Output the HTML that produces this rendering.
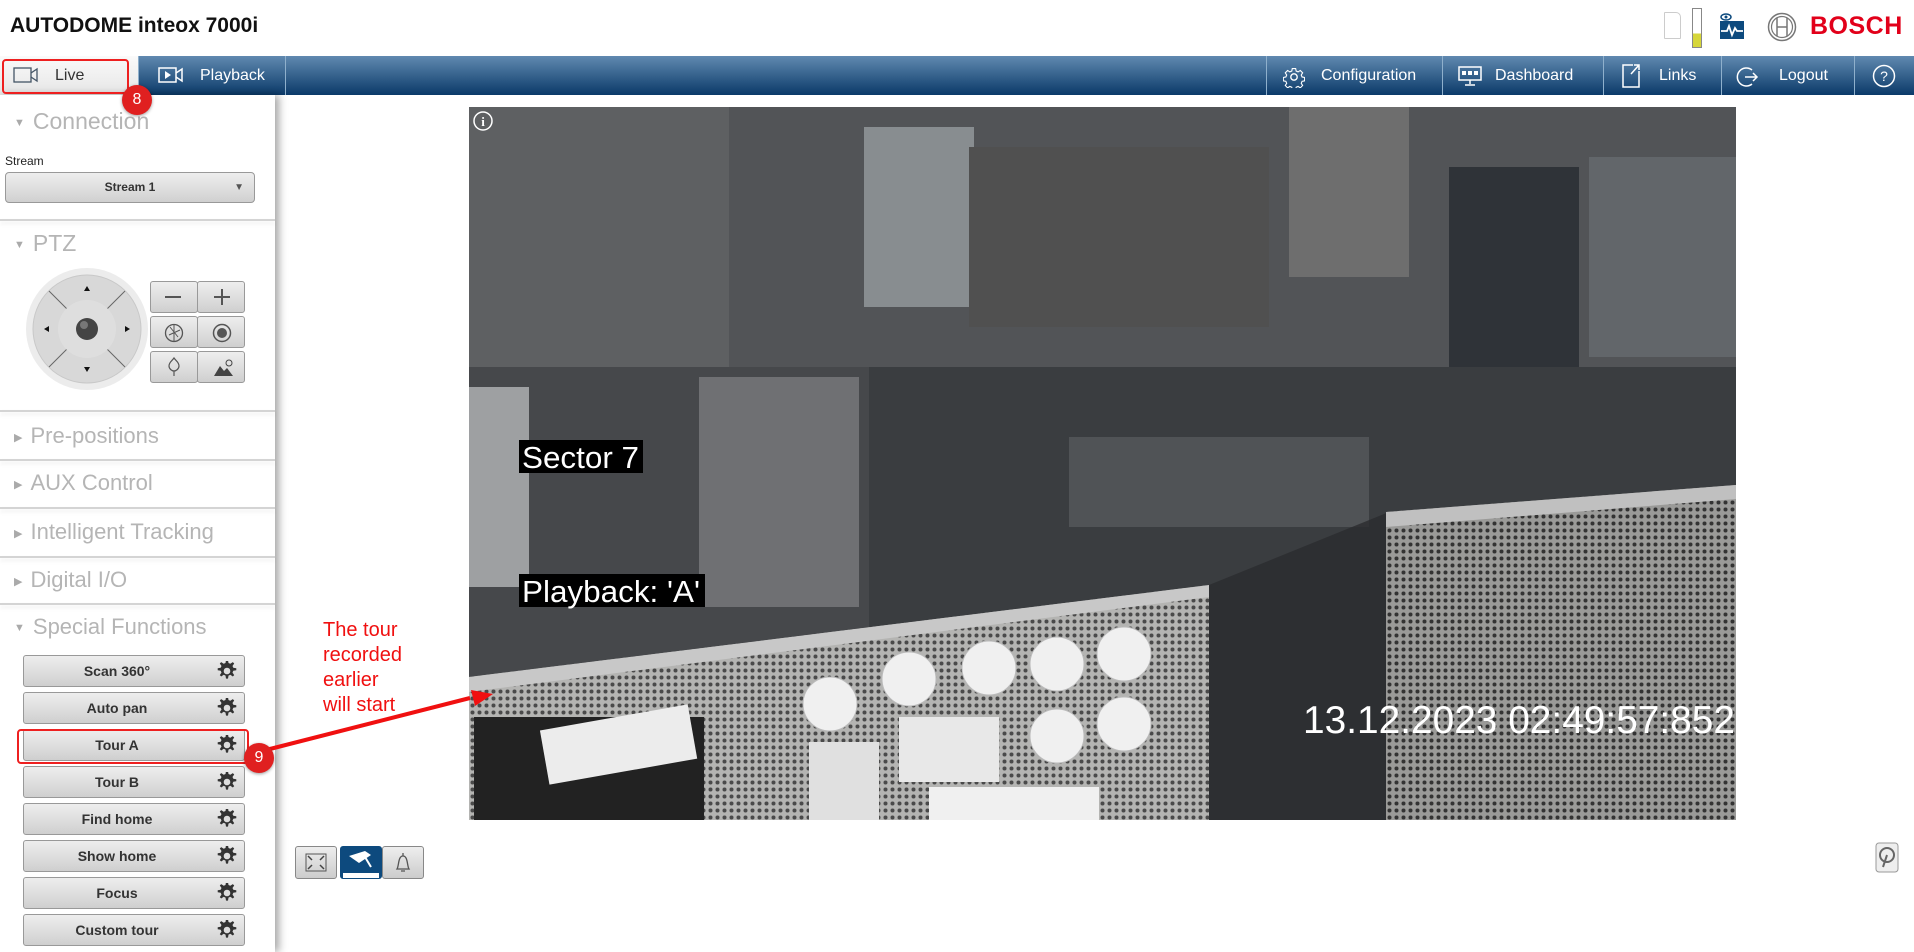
<!DOCTYPE html>
<html><head><meta charset="utf-8"><style>
*{margin:0;padding:0;box-sizing:border-box}
body{width:1914px;height:952px;background:#fff;font-family:"Liberation Sans",Arial,sans-serif;position:relative;overflow:hidden}
.abs{position:absolute}
#title{left:10px;top:14px;font-size:21px;font-weight:bold;color:#111}
#nav{left:0;top:56px;width:1914px;height:39px;background:linear-gradient(#6089b0,#0b3a69)}
.tab{position:absolute;top:0;height:39px;color:#fff;font-size:16px;line-height:39px;border-left:1px solid #8fb0cc}
.tab svg{position:absolute;top:10px}
#side{left:0;top:95px;width:275px;height:857px;background:#fff;box-shadow:4px 0 8px rgba(0,0,0,.35)}
.hdr{position:absolute;left:14px;font-size:23px;color:#b5b5b5}
.hdr span{font-size:11px;color:#aaa;margin-right:8px;vertical-align:middle}
.div{position:absolute;left:0;width:275px;height:2px;background:#d4d4d4;box-shadow:0 3px 4px rgba(0,0,0,.08)}
.btn{position:absolute;left:23px;width:222px;height:32px;border:1px solid #999;border-radius:3px;background:linear-gradient(#eee,#cfcfcf);font-size:14px;font-weight:bold;color:#333;text-align:center;line-height:30px;padding-right:34px}
.btn svg{position:absolute;right:6px;top:5px}
.pb{position:absolute;width:48px;height:32px;border:1px solid #999;border-radius:3px;background:linear-gradient(#eee,#cfcfcf)}
.red{color:#f01010;font-size:20px;line-height:25px}
.badge{position:absolute;width:30px;height:30px;border-radius:50%;background:#e02020;color:#fff;font-size:16px;text-align:center;line-height:30px;box-shadow:0 1px 3px rgba(0,0,0,.4)}
.vb{position:absolute;width:42px;height:33px;border:1px solid #888;border-radius:3px;background:linear-gradient(#eee,#ccc)}
</style></head><body>
<div id="title" class="abs">AUTODOME inteox 7000i</div>
<div class="abs" style="left:1664px;top:12px;width:17px;height:27px;border:1px solid #ccc;border-radius:1px 5px 1px 1px"></div>
<div class="abs" style="left:1692px;top:8px;width:10px;height:40px;border:1px solid #888;background:linear-gradient(#fff 65%,#d6d63a 65%)"></div>
<svg class="abs" style="left:1720px;top:12px" width="24" height="27" viewBox="0 0 24 27"><rect x="0" y="9" width="24" height="18" fill="#0d4a7e"/><ellipse cx="6" cy="5" rx="5" ry="3" fill="none" stroke="#0d4a7e" stroke-width="1.5"/><circle cx="6" cy="5" r="1.5" fill="#0d4a7e"/><path d="M1 19h6l2-5 3 9 3-7 2 3h6" stroke="#fff" stroke-width="1.8" fill="none"/></svg>
<svg class="abs" style="left:1767px;top:12px" width="30" height="30" viewBox="0 0 30 30"><circle cx="15" cy="15" r="13.5" fill="none" stroke="#777" stroke-width="1.5"/><circle cx="15" cy="15" r="10.5" fill="none" stroke="#777" stroke-width="1.2"/><path d="M10 6v18M20 6v18M10 15h10" stroke="#777" stroke-width="1.5"/></svg>
<div class="abs" style="left:1810px;top:12px;font-size:25px;font-weight:bold;color:#e2001a;letter-spacing:0.5px">BOSCH</div>

<div id="nav" class="abs">
 <div class="tab" style="left:0;width:138px;border:none;background:linear-gradient(#fafafa,#e6e6e6);color:#333"><svg style="left:13px" width="26" height="18" viewBox="0 0 26 18"><rect x="1" y="2" width="17" height="14" fill="none" stroke="#456" stroke-width="1.3"/><path d="M18 7l6-4v12l-6-4" fill="none" stroke="#456" stroke-width="1.3"/></svg><span style="position:absolute;left:55px">Live</span></div>
 <div class="tab" style="left:138px;width:147px"><svg style="left:19px" width="26" height="18" viewBox="0 0 26 18"><rect x="1" y="2" width="17" height="14" fill="none" stroke="#fff" stroke-width="1.5"/><path d="M7 5l6 4-6 4z" fill="#fff"/><path d="M18 7l6-4v12l-6-4" fill="none" stroke="#fff" stroke-width="1.5"/></svg><span style="position:absolute;left:61px">Playback</span></div>
 <div class="tab" style="left:285px;width:1px"></div>
 <div class="tab" style="left:1266px;width:176px"><svg style="left:16px" width="22" height="22" viewBox="0 0 24 24"><circle cx="12" cy="12" r="3.5" fill="none" stroke="#fff" stroke-width="1.5"/><path d="M10 2h4l.6 3 2.3 1 2.6-1.7 2.8 2.8-1.7 2.6 1 2.3 3 .6v4l-3 .6-1 2.3 1.7 2.6-2.8 2.8-2.6-1.7-2.3 1-.6 3h-4l-.6-3-2.3-1-2.6 1.7-2.8-2.8 1.7-2.6-1-2.3-3-.6v-4l3-.6 1-2.3-1.7-2.6 2.8-2.8 2.6 1.7 2.3-1z" fill="none" stroke="#fff" stroke-width="1.3" transform="scale(.92) translate(1 1)"/></svg><span style="position:absolute;left:54px">Configuration</span></div>
 <div class="tab" style="left:1442px;width:161px"><svg style="left:15px" width="24" height="20" viewBox="0 0 24 20"><rect x="1" y="1" width="22" height="13" fill="none" stroke="#fff" stroke-width="1.5"/><rect x="4" y="5" width="4" height="4" fill="#fff"/><rect x="10" y="5" width="4" height="4" fill="#fff"/><rect x="16" y="5" width="4" height="4" fill="#fff"/><path d="M12 14v4M7 19h10" stroke="#fff" stroke-width="1.5"/></svg><span style="position:absolute;left:52px">Dashboard</span></div>
 <div class="tab" style="left:1603px;width:118px"><svg style="left:17px;top:8px" width="20" height="24" viewBox="0 0 20 24"><path d="M12 1H2v22h16V7" fill="none" stroke="#fff" stroke-width="1.5"/><path d="M10 10L18 1M13 1h5v5" fill="none" stroke="#fff" stroke-width="1.5"/></svg><span style="position:absolute;left:55px">Links</span></div>
 <div class="tab" style="left:1721px;width:133px"><svg style="left:14px" width="24" height="22" viewBox="0 0 24 22"><path d="M16 4A9 9 0 1 0 16 18" fill="none" stroke="#fff" stroke-width="1.5"/><path d="M9 11h12M17 7l4 4-4 4" fill="none" stroke="#fff" stroke-width="1.5"/></svg><span style="position:absolute;left:57px">Logout</span></div>
 <div class="tab" style="left:1854px;width:60px"><svg style="left:17px;top:8px" width="24" height="24" viewBox="0 0 24 24"><circle cx="12" cy="12" r="10.5" fill="none" stroke="#fff" stroke-width="1.5"/><text x="12" y="17" text-anchor="middle" font-size="14" fill="#fff" font-family="Liberation Sans">?</text></svg></div>
</div>

<div id="side" class="abs">
 <div class="hdr" style="top:13px"><span>▼</span>Connection</div>
 <div class="abs" style="left:5px;top:59px;font-size:12px;color:#222">Stream</div>
 <div class="abs" style="left:5px;top:77px;width:250px;height:31px;border:1px solid #999;border-radius:4px;background:linear-gradient(#eee,#d0d0d0);font-size:12px;font-weight:bold;text-align:center;line-height:29px;color:#333">Stream 1<span style="position:absolute;right:10px;font-size:10px;color:#555">▼</span></div>
 <div class="div" style="top:124px"></div>
 <div class="hdr" style="top:135px"><span>▼</span>PTZ</div>
 <svg class="abs" style="left:25px;top:172px" width="124" height="124" viewBox="0 0 124 124"><circle cx="62" cy="62" r="61" fill="#ececec"/><circle cx="62" cy="62" r="54" fill="#d8d8d8" stroke="#c8c8c8"/><path d="M24 24L100 100M100 24L24 100" stroke="#666" stroke-width="1"/><circle cx="62" cy="62" r="29" fill="#dedede"/><circle cx="62" cy="62" r="11" fill="#444"/><circle cx="59" cy="58" r="4" fill="#777"/><path d="M62 19l-3 5h6z M62 105l-3-5h6z M19 62l5-3v6z M105 62l-5-3v6z" fill="#111"/></svg>
 <div class="pb" style="left:150px;top:186px"></div><div class="pb" style="left:197px;top:186px"></div>
 <div class="pb" style="left:150px;top:221px"></div><div class="pb" style="left:197px;top:221px"></div>
 <div class="pb" style="left:150px;top:256px"></div><div class="pb" style="left:197px;top:256px"></div>
 <svg class="abs" style="left:150px;top:186px" width="96" height="102" viewBox="0 0 96 102"><path d="M15 16h16" stroke="#555" stroke-width="2"/><path d="M72 8v16M64 16h16" stroke="#555" stroke-width="2"/><circle cx="24" cy="52" r="8.5" fill="none" stroke="#555" stroke-width="1.3"/><path d="M20 46l8 10M30 49l-11 5M24 44v16" stroke="#555" stroke-width="1"/><circle cx="72" cy="52" r="8.5" fill="none" stroke="#555" stroke-width="1.5"/><circle cx="72" cy="52" r="5" fill="#555"/><path d="M24 77c-2 3-5 4-5 8 0 3 3 5 5 5s5-2 5-5c0-4-3-5-5-8zM24 90v5" fill="none" stroke="#555" stroke-width="1.2"/><path d="M64 95l6-10 4 5 3-3 6 8z" fill="#444"/><circle cx="79" cy="82" r="3" fill="none" stroke="#444"/></svg>
 <div class="div" style="top:315px"></div>
 <div class="hdr" style="top:328px;font-size:22px"><span>▶</span>Pre-positions</div>
 <div class="div" style="top:364px"></div>
 <div class="hdr" style="top:375px;font-size:22px"><span>▶</span>AUX Control</div>
 <div class="div" style="top:412px"></div>
 <div class="hdr" style="top:424px;font-size:22px"><span>▶</span>Intelligent Tracking</div>
 <div class="div" style="top:461px"></div>
 <div class="hdr" style="top:472px;font-size:22px"><span>▶</span>Digital I/O</div>
 <div class="div" style="top:508px"></div>
 <div class="hdr" style="top:519px;font-size:22px"><span>▼</span>Special Functions</div>
</div>
<svg width="0" height="0" style="position:absolute"><defs><g id="gear"><path d="M10 0h2l.5 3 1.8.8 2.5-1.7 1.4 1.4-1.7 2.5.8 1.8 3 .5v2l-3 .5-.8 1.8 1.7 2.5-1.4 1.4-2.5-1.7-1.8.8-.5 3h-2l-.5-3-1.8-.8-2.5 1.7-1.4-1.4 1.7-2.5-.8-1.8-3-.5v-2l3-.5.8-1.8-1.7-2.5 1.4-1.4 2.5 1.7 1.8-.8z" fill="#333" transform="translate(-1 -1)"/><circle cx="10" cy="10" r="3.3" fill="#ddd"/></g></defs></svg>
<div class="btn" style="top:655px">Scan 360°<svg width="21" height="21" viewBox="0 0 21 21"><use href="#gear"/></svg></div>
<div class="btn" style="top:692px">Auto pan<svg width="21" height="21" viewBox="0 0 21 21"><use href="#gear"/></svg></div>
<div class="btn" style="top:729px">Tour A<svg width="21" height="21" viewBox="0 0 21 21"><use href="#gear"/></svg></div>
<div class="btn" style="top:766px">Tour B<svg width="21" height="21" viewBox="0 0 21 21"><use href="#gear"/></svg></div>
<div class="btn" style="top:803px">Find home<svg width="21" height="21" viewBox="0 0 21 21"><use href="#gear"/></svg></div>
<div class="btn" style="top:840px">Show home<svg width="21" height="21" viewBox="0 0 21 21"><use href="#gear"/></svg></div>
<div class="btn" style="top:877px">Focus<svg width="21" height="21" viewBox="0 0 21 21"><use href="#gear"/></svg></div>
<div class="btn" style="top:914px">Custom tour<svg width="21" height="21" viewBox="0 0 21 21"><use href="#gear"/></svg></div>

<svg class="abs" style="left:469px;top:107px" width="1267" height="713" viewBox="0 0 1267 713">
 <defs>
  <pattern id="mesh" width="7" height="7" patternUnits="userSpaceOnUse"><rect width="7" height="7" fill="#b4b4b2"/><circle cx="3.5" cy="3.5" r="2" fill="#4a4a4a"/></pattern>
  <pattern id="mesh2" width="7" height="7" patternUnits="userSpaceOnUse"><rect width="7" height="7" fill="#9a9a98"/><circle cx="3.5" cy="3.5" r="2" fill="#333"/></pattern>
 </defs>
 <rect width="1267" height="713" fill="#3a3d40"/>
 <rect width="1267" height="260" fill="#525457"/>
 <rect x="0" y="0" width="260" height="270" fill="#5e6062"/>
 <rect x="395" y="20" width="110" height="180" fill="#888d90"/>
 <rect x="500" y="40" width="300" height="180" fill="#505050"/>
 <rect x="820" y="0" width="120" height="170" fill="#6e6e6e"/>
 <rect x="980" y="60" width="130" height="200" fill="#2f3338"/>
 <rect x="1120" y="50" width="147" height="200" fill="#62666a"/>
 <rect x="0" y="260" width="400" height="310" fill="#46484b"/>
 <rect x="0" y="280" width="60" height="200" fill="#9ea0a2"/>
 <rect x="230" y="270" width="160" height="230" fill="#8a8c8e" opacity=".6"/>
 <rect x="600" y="330" width="300" height="90" fill="#505356"/>
 <path d="M0 570L740 478V713H0z" fill="url(#mesh)"/>
 <path d="M0 570L740 478V490L0 585z" fill="#c8c8c8"/>
 <rect x="5" y="610" width="230" height="103" fill="#222"/>
 <rect x="75" y="610" width="150" height="55" fill="#ececec" transform="rotate(-10 150 640)"/>
 <rect x="430" y="610" width="100" height="65" fill="#e8e8e8"/>
 <rect x="340" y="635" width="70" height="78" fill="#e0e0e0"/>
 <rect x="460" y="680" width="170" height="33" fill="#f0f0f0"/>
 <g fill="#f0f0f0" stroke="#bbb"><circle cx="361" cy="597" r="27"/><circle cx="440" cy="572" r="27"/><circle cx="520" cy="561" r="27"/><circle cx="588" cy="557" r="27"/><circle cx="655" cy="547" r="27"/><circle cx="588" cy="629" r="27"/><circle cx="655" cy="617" r="27"/></g>
 <path d="M740 478V713h180V405z" fill="#2a2c2e" opacity=".8"/>
 <path d="M917 405L1267 378V713H917z" fill="url(#mesh2)"/>
 <path d="M917 405L1267 378V392L917 420z" fill="#c0c0c0"/>
 <circle cx="14" cy="14" r="9" fill="none" stroke="#fff" stroke-width="1.5"/><text x="14" y="19" text-anchor="middle" font-size="13" font-weight="bold" fill="#fff" font-family="Liberation Serif">i</text>
 <rect x="50" y="333" width="124" height="33" fill="#000"/>
 <text x="53" y="361" font-size="31" fill="#fff" font-family="Liberation Sans" textLength="117" lengthAdjust="spacingAndGlyphs">Sector 7</text>
 <rect x="50" y="467" width="186" height="33" fill="#000"/>
 <text x="53" y="495" font-size="31" fill="#fff" font-family="Liberation Sans" textLength="178" lengthAdjust="spacingAndGlyphs">Playback: 'A'</text>
 <text x="834" y="626" font-size="39" fill="#fff" font-family="Liberation Sans" textLength="432" lengthAdjust="spacingAndGlyphs">13.12.2023 02:49:57:852</text>
</svg>

<div class="red abs" style="left:323px;top:618px">The tour<br>recorded<br>earlier<br>will start</div>
<svg class="abs" style="left:0;top:0" width="1914" height="952" viewBox="0 0 1914 952"><path d="M266 750L470 698" stroke="#f01010" stroke-width="4"/><path d="M493 694l-22-4 4 16z" fill="#f01010"/></svg>

<div class="abs" style="left:2px;top:59px;width:127px;height:35px;border:2px solid #ee2020;border-radius:4px"></div>
<div class="badge" style="left:122px;top:85px">8</div>
<div class="abs" style="left:17px;top:729px;width:232px;height:35px;border:2px solid #ee2020;border-radius:4px"></div>
<div class="badge" style="left:244px;top:743px">9</div>

<div class="vb" style="left:295px;top:846px"><svg width="40" height="31" viewBox="0 0 40 31"><rect x="10" y="7" width="20" height="17" fill="none" stroke="#555"/><path d="M12 9l4 4M28 9l-4 4M12 22l4-4M28 22l-4-4" stroke="#444" stroke-width="1.5"/></svg></div>
<div class="vb" style="left:340px;top:846px;background:#0d4a7e;border-color:#0d4a7e"><svg width="40" height="31" viewBox="0 0 40 31"><path d="M8 9l16-5 6 4-12 8z" fill="#fff"/><path d="M24 10l6 10" stroke="#fff" stroke-width="2"/><rect x="2" y="26" width="36" height="5" fill="#fff"/></svg></div>
<div class="vb" style="left:382px;top:846px"><svg width="40" height="31" viewBox="0 0 40 31"><path d="M14 22c2-3 1-13 6-13s4 10 6 13z M20 9V6M18 24h4" fill="none" stroke="#555" stroke-width="1.3"/></svg></div>
<svg class="abs" style="left:1875px;top:842px" width="24" height="31" viewBox="0 0 24 31"><rect x="1" y="1" width="22" height="29" rx="3" fill="#eee" stroke="#999"/><circle cx="12" cy="13" r="7" fill="none" stroke="#666" stroke-width="2"/><path d="M12 13l-4 12" stroke="#666" stroke-width="2"/></svg>
</body></html>
